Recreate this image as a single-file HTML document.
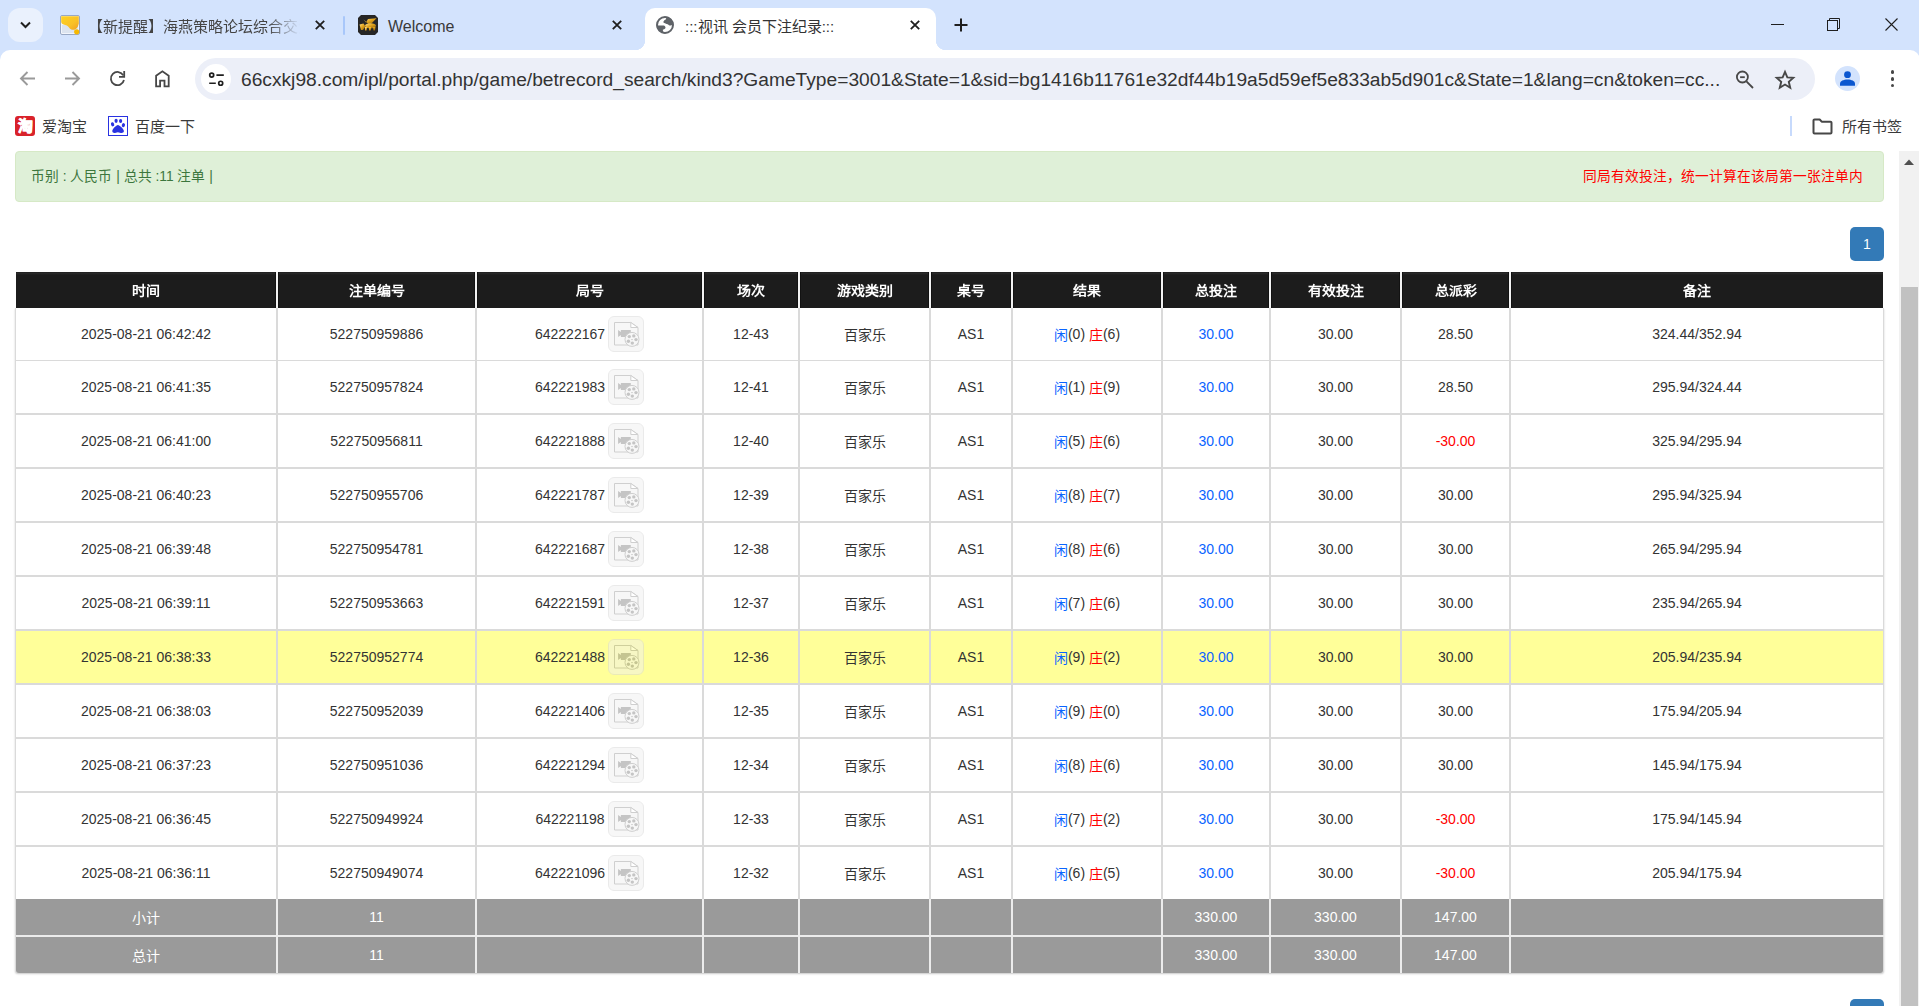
<!DOCTYPE html>
<html lang="zh-CN"><head><meta charset="utf-8"><title>:::视讯 会员下注纪录:::</title>
<style>
*{box-sizing:border-box;margin:0;padding:0}
html,body{width:1919px;height:1006px;overflow:hidden;background:#fff;font-family:"Liberation Sans",sans-serif;}
.abs{position:absolute}
.tabbar{position:absolute;left:0;top:0;width:1919px;height:62px;background:#d3e3fd}
.toolbar{position:absolute;left:0;top:50px;width:1920px;height:96px;background:#fff;border-radius:10px 10px 0 0}
.t{position:absolute;white-space:nowrap;line-height:1}
.cell{position:absolute;display:flex;align-items:center;justify-content:center;white-space:nowrap;font-size:14px;color:#333}
.hd{position:absolute;display:flex;align-items:center;justify-content:center;white-space:nowrap;font-size:14px;color:#fff;font-weight:bold;background:#1c1c1c}
.line{position:absolute;background:#dadada}
.vbtn{display:inline-block;width:36px;height:36px;margin-left:3px;opacity:.5;position:relative}
.vbtn svg{position:absolute;left:0;top:0}
.blue{color:#0a64ff}.red{color:#ff0000}
</style></head><body>

<div class="tabbar"></div>
<div class="abs" style="left:8px;top:8px;width:35px;height:34px;border-radius:12px;background:#eaf1fd"></div>
<svg class="abs" style="left:19px;top:18.5px" width="13" height="12" viewBox="0 0 13 12"><path d="M2 3.5l4.5 4.5 4.5-4.5" fill="none" stroke="#1f1f1f" stroke-width="2"/></svg>
<svg class="abs" style="left:60px;top:15px" width="20" height="20" viewBox="0 0 20 20"><defs><linearGradient id="yg" x1="0" y1="0" x2="1" y2="1"><stop offset="0" stop-color="#ffd21f"/><stop offset=".6" stop-color="#f9c127"/><stop offset="1" stop-color="#f0a020"/></linearGradient></defs><rect x="0.5" y="0.5" width="19" height="19" rx="1.5" fill="#f2f5fb" stroke="#98a8c4"/><rect x="2" y="10" width="16" height="8" fill="#dce4ef"/><path d="M1.2 1.2H18.8V8.5C18.2 10.5 17.8 13 15.5 14.2 13.5 15.2 11 14.8 9.8 13.5 8.8 12 7.8 10.6 5.2 10 3 9.5 1.2 8.5 1.2 7z" fill="url(#yg)"/><circle cx="16.7" cy="16.8" r="2.6" fill="#f6b800"/></svg>
<div class="t" style="left:88px;top:18.5px;font-size:15px;color:#444;width:212px;overflow:hidden;-webkit-mask-image:linear-gradient(90deg,#000 85%,transparent)">【新提醒】海燕策略论坛综合交流</div>
<svg class="abs" style="left:315px;top:20px" width="10" height="10" viewBox="0 0 10 10"><path d="M0.8 0.8L9.2 9.2M9.2 0.8L0.8 9.2" stroke="#1f1f1f" stroke-width="1.8"/></svg>
<div class="abs" style="left:343px;top:16px;width:2px;height:19px;background:#a8c7fa;border-radius:1px"></div>
<svg class="abs" style="left:358px;top:15px" width="20" height="20" viewBox="0 0 20 20"><defs><linearGradient id="gd" x1="0" y1="0" x2="1" y2="1"><stop offset="0" stop-color="#ffe08a"/><stop offset=".5" stop-color="#e0a21a"/><stop offset="1" stop-color="#8a5a08"/></linearGradient></defs><path d="M3 0h14l3 3v14l-3 3H3l-3-3V3z" fill="#262626"/><g fill="url(#gd)"><path d="M5.5 4.5l2.5 3 2-3.5 8.5-.8-5 5.2-3 .6z"/><ellipse cx="12.5" cy="10.8" rx="5.5" ry="2.6"/><path d="M1.5 9.5l4-1 2 3-2.5 3.5h-2z"/><path d="M7 12h2l-.5 3.5h-1.5zM11 12h2l-.3 3.5h-1.7zM15 12h2.5l-.5 3.5h-1.5z"/></g></svg>
<div class="t" style="left:388px;top:19px;font-size:16px;color:#3a3a3a">Welcome</div>
<svg class="abs" style="left:612px;top:20px" width="10" height="10" viewBox="0 0 10 10"><path d="M0.8 0.8L9.2 9.2M9.2 0.8L0.8 9.2" stroke="#1f1f1f" stroke-width="1.8"/></svg>
<div class="abs" style="left:645px;top:8px;width:291px;height:42px;background:#fff;border-radius:10px 10px 0 0"></div>
<div class="abs" style="left:635px;top:40px;width:10px;height:10px;background:radial-gradient(circle at 0 0,transparent 10px,#fff 10.5px)"></div>
<div class="abs" style="left:936px;top:40px;width:10px;height:10px;background:radial-gradient(circle at 100% 0,transparent 10px,#fff 10.5px)"></div>
<svg class="abs" style="left:656px;top:16px" width="18" height="18" viewBox="0 0 18 18"><defs><clipPath id="gc"><circle cx="9" cy="9" r="8.5"/></clipPath></defs><circle cx="9" cy="9" r="8" fill="none" stroke="#5f6368" stroke-width="2"/><g clip-path="url(#gc)" fill="#5f6368"><path d="M10.1 -1V3.2C8.5 3.8 7.3 5 7.4 6.5 8.5 7.4 10.5 7.8 11.6 8.3 12.5 8.8 12.8 9.3 13.5 9.4 14.8 9.5 16 9 19 8.5V-1z"/><path d="M-1 9.5H7.7C8.8 9.9 9.6 10.8 9.5 11.6 9.4 12.6 8.9 13.2 6.8 13.8 6.9 15 7.2 16.3 9.5 19H-1z"/></g></svg>
<div class="t" style="left:685px;top:18.5px;font-size:15px;color:#333">:::视讯 会员下注纪录:::</div>
<svg class="abs" style="left:910px;top:20px" width="10" height="10" viewBox="0 0 10 10"><path d="M0.8 0.8L9.2 9.2M9.2 0.8L0.8 9.2" stroke="#1f1f1f" stroke-width="1.8"/></svg>
<svg class="abs" style="left:954px;top:18px" width="14" height="14" viewBox="0 0 14 14"><path d="M7 0.5v13M0.5 7h13" stroke="#1f1f1f" stroke-width="2"/></svg>
<div class="abs" style="left:1771px;top:24px;width:13px;height:1px;background:#1f1f1f"></div>
<svg class="abs" style="left:1827px;top:18px" width="13" height="13" viewBox="0 0 13 13"><rect x="0.5" y="2.5" width="10" height="10" fill="none" stroke="#1f1f1f" stroke-width="1"/><path d="M2.5 2.5V0.5h10V10.5H10.5" fill="none" stroke="#1f1f1f" stroke-width="1"/></svg>
<svg class="abs" style="left:1885px;top:18px" width="13" height="13" viewBox="0 0 13 13"><path d="M0.5 0.5L12.5 12.5M12.5 0.5L0.5 12.5" stroke="#1f1f1f" stroke-width="1.1"/></svg>
<div class="toolbar"></div>
<svg class="abs" style="left:19px;top:70px" width="17" height="17" viewBox="0 0 17 17"><path d="M16 8.5H2.5M8.5 2L2 8.5 8.5 15" fill="none" stroke="#9a9a9a" stroke-width="1.9"/></svg>
<svg class="abs" style="left:64px;top:70px" width="17" height="17" viewBox="0 0 17 17"><path d="M1 8.5h13.5M8.5 2L15 8.5 8.5 15" fill="none" stroke="#9a9a9a" stroke-width="1.9"/></svg>
<svg class="abs" style="left:108px;top:70px" width="18" height="18" viewBox="0 0 18 18"><path d="M15.96 10A6.6 6.6 0 1 1 15.3 5.4" fill="none" stroke="#474747" stroke-width="1.8"/><path d="M16.2 1V6.9H11" fill="none" stroke="#474747" stroke-width="1.8"/></svg>
<svg class="abs" style="left:153px;top:69px" width="18" height="20" viewBox="0 0 18 20"><path d="M3.1 17.3V6.8L9.4 2.3 15.7 6.8V17.3H11.5V11.6H7.1V17.3z" fill="none" stroke="#474747" stroke-width="1.8"/></svg>
<div class="abs" style="left:195px;top:58px;width:1620px;height:42px;border-radius:21px;background:#eceff8"></div>
<div class="abs" style="left:201px;top:64px;width:30px;height:30px;border-radius:15px;background:#fff"></div>
<svg class="abs" style="left:207px;top:71px" width="18" height="16" viewBox="0 0 18 16"><circle cx="4.7" cy="4.1" r="2" fill="none" stroke="#1f1f1f" stroke-width="1.7"/><path d="M9.4 4.1H16.8M2.2 12.25H8.8" stroke="#1f1f1f" stroke-width="1.7"/><circle cx="13.7" cy="12.25" r="2" fill="none" stroke="#1f1f1f" stroke-width="1.7"/></svg>
<div class="t" id="url" style="left:241px;top:70px;font-size:19.2px;color:#333;letter-spacing:0px">66cxkj98.com/ipl/portal.php/game/betrecord_search/kind3?GameType=3001&amp;State=1&amp;sid=bg1416b11761e32df44b19a5d59ef5e833ab5d901c&amp;State=1&amp;lang=cn&amp;token=cc...</div>
<svg class="abs" style="left:1735px;top:70px" width="19" height="19" viewBox="0 0 19 19"><circle cx="7.4" cy="7" r="5.5" fill="none" stroke="#474747" stroke-width="1.8"/><path d="M5.1 7.2h4.7" stroke="#474747" stroke-width="1.8"/><path d="M11.4 11.4l6.6 6.6" stroke="#474747" stroke-width="1.8"/></svg>
<svg class="abs" style="left:1774px;top:69px" width="22" height="21" viewBox="0 0 22 21"><g transform="translate(11 10.5) scale(.9) translate(-11 -10.5)"><path d="M11 2l2.6 6.2 6.6.5-5 4.4 1.6 6.5L11 16.1l-5.8 3.5 1.6-6.5-5-4.4 6.6-.5z" fill="none" stroke="#474747" stroke-width="2.1" stroke-linejoin="miter"/></g></svg>
<div class="abs" style="left:1835px;top:66px;width:25px;height:25px;border-radius:13px;background:#d3e3fd"></div>
<svg class="abs" style="left:1839px;top:70px" width="17" height="17" viewBox="0 0 17 17"><circle cx="8.5" cy="4.7" r="3.4" fill="#0b57d0"/><path d="M1 15.8V13.6C1 11.2 4.5 9.6 8.5 9.6S16 11.2 16 13.6V15.8z" fill="#0b57d0"/></svg>
<div class="abs" style="left:1890.7px;top:70.10000000000001px;width:3.6px;height:3.6px;border-radius:2px;background:#474747"></div>
<div class="abs" style="left:1890.7px;top:76.95px;width:3.6px;height:3.6px;border-radius:2px;background:#474747"></div>
<div class="abs" style="left:1890.7px;top:83.8px;width:3.6px;height:3.6px;border-radius:2px;background:#474747"></div>
<div class="abs" style="left:15px;top:116px;width:20px;height:20px;border-radius:3px;background:#d9222a;overflow:hidden"><div class="abs" style="left:-1px;top:-0.5px;width:22px;height:20px;color:#fff;font-size:15px;font-weight:bold;-webkit-text-stroke:0.7px #fff;line-height:20px;text-align:center">淘</div></div>
<div class="t" style="left:42px;top:119px;font-size:15px;color:#3a3a3a">爱淘宝</div>
<div class="abs" style="left:108px;top:116px;width:20px;height:20px;border:1.5px solid #2932e1;background:#fff"></div>
<svg class="abs" style="left:110px;top:118px" width="16" height="16" viewBox="0 0 16 16"><g fill="#2932e1"><ellipse cx="2.6" cy="6.3" rx="1.6" ry="2.1" transform="rotate(-15 2.6 6.3)"/><ellipse cx="6.1" cy="2.8" rx="1.6" ry="2.1"/><ellipse cx="10.6" cy="3" rx="1.6" ry="2.1"/><ellipse cx="13.4" cy="7.2" rx="1.6" ry="2.1" transform="rotate(15 13.4 7.2)"/><path d="M7.9 6.9C9.5 6.9 13.9 11 13.9 13 13.9 15 11.5 15.2 10 14.7 9 14.4 8.5 14.2 7.9 14.2 7.3 14.2 6.8 14.4 5.8 14.7 4.3 15.2 2.3 15 2.3 13 2.3 11 6.3 6.9 7.9 6.9z"/></g></svg>
<div class="t" style="left:135px;top:119px;font-size:15px;color:#3a3a3a">百度一下</div>
<div class="abs" style="left:1790px;top:116px;width:2px;height:20px;background:#c7dafc"></div>
<svg class="abs" style="left:1812px;top:117.5px" width="21" height="17" viewBox="0 0 21 17"><path d="M1.5 2.5a1 1 0 0 1 1-1h5.2l2 2.2h8.8a1 1 0 0 1 1 1v9.8a1 1 0 0 1-1 1H2.5a1 1 0 0 1-1-1z" fill="none" stroke="#474747" stroke-width="2" stroke-linejoin="round"/></svg>
<div class="t" style="left:1842px;top:119px;font-size:15px;color:#3a3a3a">所有书签</div>
<div class="abs" style="left:1899px;top:151px;width:20px;height:855px;background:#f1f1f1"></div>
<svg class="abs" style="left:1903px;top:158px" width="12" height="8" viewBox="0 0 12 8"><path d="M1 7L6 1.5 11 7z" fill="#505050"/></svg>
<div class="abs" style="left:1901px;top:287px;width:17px;height:719px;background:#c1c1c1"></div>
<div class="abs" style="left:15px;top:151px;width:1869px;height:51px;border:1px solid #d6e9c6;border-radius:4px;background:#dff0d8"></div>
<div class="t" style="left:31px;top:170px;font-size:13.75px;color:#3c763d">币别 : 人民币 | 总共 :11 注单 |</div>
<div class="t" style="left:1583px;top:170px;font-size:13.75px;color:#ff0000">同局有效投注，统一计算在该局第一张注单内</div>
<div class="abs" style="left:1850px;top:227px;width:34px;height:34px;border-radius:5px;background:#337ab7;color:#fff;font-size:14px;line-height:34px;text-align:center">1</div>
<div class="abs" style="left:1850px;top:999px;width:34px;height:34px;border-radius:5px;background:#337ab7"></div>
<div class="abs" style="left:15px;top:308px;width:1869px;height:665px;border-radius:0 0 3px 3px;box-shadow:0 1px 2px rgba(0,0,0,.22);background:#dadada"></div>
<div class="hd" style="left:16px;top:272px;width:260px;height:36px"><span style="display:inline-block;transform:scaleY(.9);margin-top:-1px">时间</span></div>
<div class="hd" style="left:278px;top:272px;width:197px;height:36px"><span style="display:inline-block;transform:scaleY(.9);margin-top:-1px">注单编号</span></div>
<div class="hd" style="left:477px;top:272px;width:225px;height:36px"><span style="display:inline-block;transform:scaleY(.9);margin-top:-1px">局号</span></div>
<div class="hd" style="left:704px;top:272px;width:94px;height:36px"><span style="display:inline-block;transform:scaleY(.9);margin-top:-1px">场次</span></div>
<div class="hd" style="left:800px;top:272px;width:129px;height:36px"><span style="display:inline-block;transform:scaleY(.9);margin-top:-1px">游戏类别</span></div>
<div class="hd" style="left:931px;top:272px;width:80px;height:36px"><span style="display:inline-block;transform:scaleY(.9);margin-top:-1px">桌号</span></div>
<div class="hd" style="left:1013px;top:272px;width:148px;height:36px"><span style="display:inline-block;transform:scaleY(.9);margin-top:-1px">结果</span></div>
<div class="hd" style="left:1163px;top:272px;width:106px;height:36px"><span style="display:inline-block;transform:scaleY(.9);margin-top:-1px">总投注</span></div>
<div class="hd" style="left:1271px;top:272px;width:129px;height:36px"><span style="display:inline-block;transform:scaleY(.9);margin-top:-1px">有效投注</span></div>
<div class="hd" style="left:1402px;top:272px;width:107px;height:36px"><span style="display:inline-block;transform:scaleY(.9);margin-top:-1px">总派彩</span></div>
<div class="hd" style="left:1511px;top:272px;width:372px;height:36px"><span style="display:inline-block;transform:scaleY(.9);margin-top:-1px">备注</span></div>
<div class="abs" style="left:16px;top:272px;width:1867px;height:3px;background:linear-gradient(#1c1c1c,#2a2a2a 40%,#1c1c1c)"></div>
<div class="abs" style="left:275px;top:272px;width:1px;height:36px;background:#121212"></div>
<div class="abs" style="left:276px;top:272px;width:2px;height:36px;background:#f2f2f2"></div>
<div class="abs" style="left:278px;top:272px;width:1px;height:36px;background:#121212"></div>
<div class="abs" style="left:474px;top:272px;width:1px;height:36px;background:#121212"></div>
<div class="abs" style="left:475px;top:272px;width:2px;height:36px;background:#f2f2f2"></div>
<div class="abs" style="left:477px;top:272px;width:1px;height:36px;background:#121212"></div>
<div class="abs" style="left:701px;top:272px;width:1px;height:36px;background:#121212"></div>
<div class="abs" style="left:702px;top:272px;width:2px;height:36px;background:#f2f2f2"></div>
<div class="abs" style="left:704px;top:272px;width:1px;height:36px;background:#121212"></div>
<div class="abs" style="left:797px;top:272px;width:1px;height:36px;background:#121212"></div>
<div class="abs" style="left:798px;top:272px;width:2px;height:36px;background:#f2f2f2"></div>
<div class="abs" style="left:800px;top:272px;width:1px;height:36px;background:#121212"></div>
<div class="abs" style="left:928px;top:272px;width:1px;height:36px;background:#121212"></div>
<div class="abs" style="left:929px;top:272px;width:2px;height:36px;background:#f2f2f2"></div>
<div class="abs" style="left:931px;top:272px;width:1px;height:36px;background:#121212"></div>
<div class="abs" style="left:1010px;top:272px;width:1px;height:36px;background:#121212"></div>
<div class="abs" style="left:1011px;top:272px;width:2px;height:36px;background:#f2f2f2"></div>
<div class="abs" style="left:1013px;top:272px;width:1px;height:36px;background:#121212"></div>
<div class="abs" style="left:1160px;top:272px;width:1px;height:36px;background:#121212"></div>
<div class="abs" style="left:1161px;top:272px;width:2px;height:36px;background:#f2f2f2"></div>
<div class="abs" style="left:1163px;top:272px;width:1px;height:36px;background:#121212"></div>
<div class="abs" style="left:1268px;top:272px;width:1px;height:36px;background:#121212"></div>
<div class="abs" style="left:1269px;top:272px;width:2px;height:36px;background:#f2f2f2"></div>
<div class="abs" style="left:1271px;top:272px;width:1px;height:36px;background:#121212"></div>
<div class="abs" style="left:1399px;top:272px;width:1px;height:36px;background:#121212"></div>
<div class="abs" style="left:1400px;top:272px;width:2px;height:36px;background:#f2f2f2"></div>
<div class="abs" style="left:1402px;top:272px;width:1px;height:36px;background:#121212"></div>
<div class="abs" style="left:1508px;top:272px;width:1px;height:36px;background:#121212"></div>
<div class="abs" style="left:1509px;top:272px;width:2px;height:36px;background:#f2f2f2"></div>
<div class="abs" style="left:1511px;top:272px;width:1px;height:36px;background:#121212"></div>
<div class="cell" style="left:16px;top:308px;width:260px;height:52px;background:#fff">2025-08-21 06:42:42</div>
<div class="cell" style="left:278px;top:308px;width:197px;height:52px;background:#fff">522750959886</div>
<div class="cell" style="left:477px;top:308px;width:225px;height:52px;background:#fff">642222167<span class="vbtn"><svg width="36" height="36" viewBox="0 0 36 36"><rect x="0.5" y="0.5" width="35" height="35" rx="5.5" fill="#f0f0f0" stroke="#d6d6d6"/><path d="M6.5 6.5H22.8L30 11.5V29H6.5z" fill="#f0f0f0" stroke="#a0a0a0"/><path d="M22.8 6.5V11.5H30z" fill="#fff" stroke="#a0a0a0"/><path d="M12.9 13.9h9.9v7.2h-9.9zM10.1 13.9l2.8 2v3.2l-2.8 2z" fill="#8c8c8c"/><circle cx="24" cy="23.4" r="7" fill="#f0f0f0" stroke="#a0a0a0"/><g fill="#8c8c8c"><circle cx="21.3" cy="20.6" r="1.7"/><circle cx="25.8" cy="19.9" r="1.7"/><circle cx="28" cy="23.6" r="1.7"/><circle cx="24.3" cy="27.1" r="1.7"/><circle cx="20.4" cy="25.2" r="1.7"/></g><path d="M23.3 23.6h1.4" stroke="#8c8c8c"/></svg></span></div>
<div class="cell" style="left:704px;top:308px;width:94px;height:52px;background:#fff">12-43</div>
<div class="cell" style="left:800px;top:308px;width:129px;height:52px;background:#fff">百家乐</div>
<div class="cell" style="left:931px;top:308px;width:80px;height:52px;background:#fff">AS1</div>
<div class="cell" style="left:1013px;top:308px;width:148px;height:52px;background:#fff"><span class="blue">闲</span>(0)&nbsp;<span class="red">庄</span>(6)</div>
<div class="cell" style="left:1163px;top:308px;width:106px;height:52px;background:#fff"><span class="blue">30.00</span></div>
<div class="cell" style="left:1271px;top:308px;width:129px;height:52px;background:#fff">30.00</div>
<div class="cell" style="left:1402px;top:308px;width:107px;height:52px;background:#fff"><span class="">28.50</span></div>
<div class="cell" style="left:1511px;top:308px;width:372px;height:52px;background:#fff">324.44/352.94</div>
<div class="cell" style="left:16px;top:361px;width:260px;height:52px;background:#fff">2025-08-21 06:41:35</div>
<div class="cell" style="left:278px;top:361px;width:197px;height:52px;background:#fff">522750957824</div>
<div class="cell" style="left:477px;top:361px;width:225px;height:52px;background:#fff">642221983<span class="vbtn"><svg width="36" height="36" viewBox="0 0 36 36"><rect x="0.5" y="0.5" width="35" height="35" rx="5.5" fill="#f0f0f0" stroke="#d6d6d6"/><path d="M6.5 6.5H22.8L30 11.5V29H6.5z" fill="#f0f0f0" stroke="#a0a0a0"/><path d="M22.8 6.5V11.5H30z" fill="#fff" stroke="#a0a0a0"/><path d="M12.9 13.9h9.9v7.2h-9.9zM10.1 13.9l2.8 2v3.2l-2.8 2z" fill="#8c8c8c"/><circle cx="24" cy="23.4" r="7" fill="#f0f0f0" stroke="#a0a0a0"/><g fill="#8c8c8c"><circle cx="21.3" cy="20.6" r="1.7"/><circle cx="25.8" cy="19.9" r="1.7"/><circle cx="28" cy="23.6" r="1.7"/><circle cx="24.3" cy="27.1" r="1.7"/><circle cx="20.4" cy="25.2" r="1.7"/></g><path d="M23.3 23.6h1.4" stroke="#8c8c8c"/></svg></span></div>
<div class="cell" style="left:704px;top:361px;width:94px;height:52px;background:#fff">12-41</div>
<div class="cell" style="left:800px;top:361px;width:129px;height:52px;background:#fff">百家乐</div>
<div class="cell" style="left:931px;top:361px;width:80px;height:52px;background:#fff">AS1</div>
<div class="cell" style="left:1013px;top:361px;width:148px;height:52px;background:#fff"><span class="blue">闲</span>(1)&nbsp;<span class="red">庄</span>(9)</div>
<div class="cell" style="left:1163px;top:361px;width:106px;height:52px;background:#fff"><span class="blue">30.00</span></div>
<div class="cell" style="left:1271px;top:361px;width:129px;height:52px;background:#fff">30.00</div>
<div class="cell" style="left:1402px;top:361px;width:107px;height:52px;background:#fff"><span class="">28.50</span></div>
<div class="cell" style="left:1511px;top:361px;width:372px;height:52px;background:#fff">295.94/324.44</div>
<div class="cell" style="left:16px;top:415px;width:260px;height:52px;background:#fff">2025-08-21 06:41:00</div>
<div class="cell" style="left:278px;top:415px;width:197px;height:52px;background:#fff">522750956811</div>
<div class="cell" style="left:477px;top:415px;width:225px;height:52px;background:#fff">642221888<span class="vbtn"><svg width="36" height="36" viewBox="0 0 36 36"><rect x="0.5" y="0.5" width="35" height="35" rx="5.5" fill="#f0f0f0" stroke="#d6d6d6"/><path d="M6.5 6.5H22.8L30 11.5V29H6.5z" fill="#f0f0f0" stroke="#a0a0a0"/><path d="M22.8 6.5V11.5H30z" fill="#fff" stroke="#a0a0a0"/><path d="M12.9 13.9h9.9v7.2h-9.9zM10.1 13.9l2.8 2v3.2l-2.8 2z" fill="#8c8c8c"/><circle cx="24" cy="23.4" r="7" fill="#f0f0f0" stroke="#a0a0a0"/><g fill="#8c8c8c"><circle cx="21.3" cy="20.6" r="1.7"/><circle cx="25.8" cy="19.9" r="1.7"/><circle cx="28" cy="23.6" r="1.7"/><circle cx="24.3" cy="27.1" r="1.7"/><circle cx="20.4" cy="25.2" r="1.7"/></g><path d="M23.3 23.6h1.4" stroke="#8c8c8c"/></svg></span></div>
<div class="cell" style="left:704px;top:415px;width:94px;height:52px;background:#fff">12-40</div>
<div class="cell" style="left:800px;top:415px;width:129px;height:52px;background:#fff">百家乐</div>
<div class="cell" style="left:931px;top:415px;width:80px;height:52px;background:#fff">AS1</div>
<div class="cell" style="left:1013px;top:415px;width:148px;height:52px;background:#fff"><span class="blue">闲</span>(5)&nbsp;<span class="red">庄</span>(6)</div>
<div class="cell" style="left:1163px;top:415px;width:106px;height:52px;background:#fff"><span class="blue">30.00</span></div>
<div class="cell" style="left:1271px;top:415px;width:129px;height:52px;background:#fff">30.00</div>
<div class="cell" style="left:1402px;top:415px;width:107px;height:52px;background:#fff"><span class="red">-30.00</span></div>
<div class="cell" style="left:1511px;top:415px;width:372px;height:52px;background:#fff">325.94/295.94</div>
<div class="cell" style="left:16px;top:469px;width:260px;height:52px;background:#fff">2025-08-21 06:40:23</div>
<div class="cell" style="left:278px;top:469px;width:197px;height:52px;background:#fff">522750955706</div>
<div class="cell" style="left:477px;top:469px;width:225px;height:52px;background:#fff">642221787<span class="vbtn"><svg width="36" height="36" viewBox="0 0 36 36"><rect x="0.5" y="0.5" width="35" height="35" rx="5.5" fill="#f0f0f0" stroke="#d6d6d6"/><path d="M6.5 6.5H22.8L30 11.5V29H6.5z" fill="#f0f0f0" stroke="#a0a0a0"/><path d="M22.8 6.5V11.5H30z" fill="#fff" stroke="#a0a0a0"/><path d="M12.9 13.9h9.9v7.2h-9.9zM10.1 13.9l2.8 2v3.2l-2.8 2z" fill="#8c8c8c"/><circle cx="24" cy="23.4" r="7" fill="#f0f0f0" stroke="#a0a0a0"/><g fill="#8c8c8c"><circle cx="21.3" cy="20.6" r="1.7"/><circle cx="25.8" cy="19.9" r="1.7"/><circle cx="28" cy="23.6" r="1.7"/><circle cx="24.3" cy="27.1" r="1.7"/><circle cx="20.4" cy="25.2" r="1.7"/></g><path d="M23.3 23.6h1.4" stroke="#8c8c8c"/></svg></span></div>
<div class="cell" style="left:704px;top:469px;width:94px;height:52px;background:#fff">12-39</div>
<div class="cell" style="left:800px;top:469px;width:129px;height:52px;background:#fff">百家乐</div>
<div class="cell" style="left:931px;top:469px;width:80px;height:52px;background:#fff">AS1</div>
<div class="cell" style="left:1013px;top:469px;width:148px;height:52px;background:#fff"><span class="blue">闲</span>(8)&nbsp;<span class="red">庄</span>(7)</div>
<div class="cell" style="left:1163px;top:469px;width:106px;height:52px;background:#fff"><span class="blue">30.00</span></div>
<div class="cell" style="left:1271px;top:469px;width:129px;height:52px;background:#fff">30.00</div>
<div class="cell" style="left:1402px;top:469px;width:107px;height:52px;background:#fff"><span class="">30.00</span></div>
<div class="cell" style="left:1511px;top:469px;width:372px;height:52px;background:#fff">295.94/325.94</div>
<div class="cell" style="left:16px;top:523px;width:260px;height:52px;background:#fff">2025-08-21 06:39:48</div>
<div class="cell" style="left:278px;top:523px;width:197px;height:52px;background:#fff">522750954781</div>
<div class="cell" style="left:477px;top:523px;width:225px;height:52px;background:#fff">642221687<span class="vbtn"><svg width="36" height="36" viewBox="0 0 36 36"><rect x="0.5" y="0.5" width="35" height="35" rx="5.5" fill="#f0f0f0" stroke="#d6d6d6"/><path d="M6.5 6.5H22.8L30 11.5V29H6.5z" fill="#f0f0f0" stroke="#a0a0a0"/><path d="M22.8 6.5V11.5H30z" fill="#fff" stroke="#a0a0a0"/><path d="M12.9 13.9h9.9v7.2h-9.9zM10.1 13.9l2.8 2v3.2l-2.8 2z" fill="#8c8c8c"/><circle cx="24" cy="23.4" r="7" fill="#f0f0f0" stroke="#a0a0a0"/><g fill="#8c8c8c"><circle cx="21.3" cy="20.6" r="1.7"/><circle cx="25.8" cy="19.9" r="1.7"/><circle cx="28" cy="23.6" r="1.7"/><circle cx="24.3" cy="27.1" r="1.7"/><circle cx="20.4" cy="25.2" r="1.7"/></g><path d="M23.3 23.6h1.4" stroke="#8c8c8c"/></svg></span></div>
<div class="cell" style="left:704px;top:523px;width:94px;height:52px;background:#fff">12-38</div>
<div class="cell" style="left:800px;top:523px;width:129px;height:52px;background:#fff">百家乐</div>
<div class="cell" style="left:931px;top:523px;width:80px;height:52px;background:#fff">AS1</div>
<div class="cell" style="left:1013px;top:523px;width:148px;height:52px;background:#fff"><span class="blue">闲</span>(8)&nbsp;<span class="red">庄</span>(6)</div>
<div class="cell" style="left:1163px;top:523px;width:106px;height:52px;background:#fff"><span class="blue">30.00</span></div>
<div class="cell" style="left:1271px;top:523px;width:129px;height:52px;background:#fff">30.00</div>
<div class="cell" style="left:1402px;top:523px;width:107px;height:52px;background:#fff"><span class="">30.00</span></div>
<div class="cell" style="left:1511px;top:523px;width:372px;height:52px;background:#fff">265.94/295.94</div>
<div class="cell" style="left:16px;top:577px;width:260px;height:52px;background:#fff">2025-08-21 06:39:11</div>
<div class="cell" style="left:278px;top:577px;width:197px;height:52px;background:#fff">522750953663</div>
<div class="cell" style="left:477px;top:577px;width:225px;height:52px;background:#fff">642221591<span class="vbtn"><svg width="36" height="36" viewBox="0 0 36 36"><rect x="0.5" y="0.5" width="35" height="35" rx="5.5" fill="#f0f0f0" stroke="#d6d6d6"/><path d="M6.5 6.5H22.8L30 11.5V29H6.5z" fill="#f0f0f0" stroke="#a0a0a0"/><path d="M22.8 6.5V11.5H30z" fill="#fff" stroke="#a0a0a0"/><path d="M12.9 13.9h9.9v7.2h-9.9zM10.1 13.9l2.8 2v3.2l-2.8 2z" fill="#8c8c8c"/><circle cx="24" cy="23.4" r="7" fill="#f0f0f0" stroke="#a0a0a0"/><g fill="#8c8c8c"><circle cx="21.3" cy="20.6" r="1.7"/><circle cx="25.8" cy="19.9" r="1.7"/><circle cx="28" cy="23.6" r="1.7"/><circle cx="24.3" cy="27.1" r="1.7"/><circle cx="20.4" cy="25.2" r="1.7"/></g><path d="M23.3 23.6h1.4" stroke="#8c8c8c"/></svg></span></div>
<div class="cell" style="left:704px;top:577px;width:94px;height:52px;background:#fff">12-37</div>
<div class="cell" style="left:800px;top:577px;width:129px;height:52px;background:#fff">百家乐</div>
<div class="cell" style="left:931px;top:577px;width:80px;height:52px;background:#fff">AS1</div>
<div class="cell" style="left:1013px;top:577px;width:148px;height:52px;background:#fff"><span class="blue">闲</span>(7)&nbsp;<span class="red">庄</span>(6)</div>
<div class="cell" style="left:1163px;top:577px;width:106px;height:52px;background:#fff"><span class="blue">30.00</span></div>
<div class="cell" style="left:1271px;top:577px;width:129px;height:52px;background:#fff">30.00</div>
<div class="cell" style="left:1402px;top:577px;width:107px;height:52px;background:#fff"><span class="">30.00</span></div>
<div class="cell" style="left:1511px;top:577px;width:372px;height:52px;background:#fff">235.94/265.94</div>
<div class="cell" style="left:16px;top:631px;width:260px;height:52px;background:#ffff99">2025-08-21 06:38:33</div>
<div class="cell" style="left:278px;top:631px;width:197px;height:52px;background:#ffff99">522750952774</div>
<div class="cell" style="left:477px;top:631px;width:225px;height:52px;background:#ffff99">642221488<span class="vbtn"><svg width="36" height="36" viewBox="0 0 36 36"><rect x="0.5" y="0.5" width="35" height="35" rx="5.5" fill="#f0f0f0" stroke="#d6d6d6"/><path d="M6.5 6.5H22.8L30 11.5V29H6.5z" fill="#f0f0f0" stroke="#a0a0a0"/><path d="M22.8 6.5V11.5H30z" fill="#fff" stroke="#a0a0a0"/><path d="M12.9 13.9h9.9v7.2h-9.9zM10.1 13.9l2.8 2v3.2l-2.8 2z" fill="#8c8c8c"/><circle cx="24" cy="23.4" r="7" fill="#f0f0f0" stroke="#a0a0a0"/><g fill="#8c8c8c"><circle cx="21.3" cy="20.6" r="1.7"/><circle cx="25.8" cy="19.9" r="1.7"/><circle cx="28" cy="23.6" r="1.7"/><circle cx="24.3" cy="27.1" r="1.7"/><circle cx="20.4" cy="25.2" r="1.7"/></g><path d="M23.3 23.6h1.4" stroke="#8c8c8c"/></svg></span></div>
<div class="cell" style="left:704px;top:631px;width:94px;height:52px;background:#ffff99">12-36</div>
<div class="cell" style="left:800px;top:631px;width:129px;height:52px;background:#ffff99">百家乐</div>
<div class="cell" style="left:931px;top:631px;width:80px;height:52px;background:#ffff99">AS1</div>
<div class="cell" style="left:1013px;top:631px;width:148px;height:52px;background:#ffff99"><span class="blue">闲</span>(9)&nbsp;<span class="red">庄</span>(2)</div>
<div class="cell" style="left:1163px;top:631px;width:106px;height:52px;background:#ffff99"><span class="blue">30.00</span></div>
<div class="cell" style="left:1271px;top:631px;width:129px;height:52px;background:#ffff99">30.00</div>
<div class="cell" style="left:1402px;top:631px;width:107px;height:52px;background:#ffff99"><span class="">30.00</span></div>
<div class="cell" style="left:1511px;top:631px;width:372px;height:52px;background:#ffff99">205.94/235.94</div>
<div class="cell" style="left:16px;top:685px;width:260px;height:52px;background:#fff">2025-08-21 06:38:03</div>
<div class="cell" style="left:278px;top:685px;width:197px;height:52px;background:#fff">522750952039</div>
<div class="cell" style="left:477px;top:685px;width:225px;height:52px;background:#fff">642221406<span class="vbtn"><svg width="36" height="36" viewBox="0 0 36 36"><rect x="0.5" y="0.5" width="35" height="35" rx="5.5" fill="#f0f0f0" stroke="#d6d6d6"/><path d="M6.5 6.5H22.8L30 11.5V29H6.5z" fill="#f0f0f0" stroke="#a0a0a0"/><path d="M22.8 6.5V11.5H30z" fill="#fff" stroke="#a0a0a0"/><path d="M12.9 13.9h9.9v7.2h-9.9zM10.1 13.9l2.8 2v3.2l-2.8 2z" fill="#8c8c8c"/><circle cx="24" cy="23.4" r="7" fill="#f0f0f0" stroke="#a0a0a0"/><g fill="#8c8c8c"><circle cx="21.3" cy="20.6" r="1.7"/><circle cx="25.8" cy="19.9" r="1.7"/><circle cx="28" cy="23.6" r="1.7"/><circle cx="24.3" cy="27.1" r="1.7"/><circle cx="20.4" cy="25.2" r="1.7"/></g><path d="M23.3 23.6h1.4" stroke="#8c8c8c"/></svg></span></div>
<div class="cell" style="left:704px;top:685px;width:94px;height:52px;background:#fff">12-35</div>
<div class="cell" style="left:800px;top:685px;width:129px;height:52px;background:#fff">百家乐</div>
<div class="cell" style="left:931px;top:685px;width:80px;height:52px;background:#fff">AS1</div>
<div class="cell" style="left:1013px;top:685px;width:148px;height:52px;background:#fff"><span class="blue">闲</span>(9)&nbsp;<span class="red">庄</span>(0)</div>
<div class="cell" style="left:1163px;top:685px;width:106px;height:52px;background:#fff"><span class="blue">30.00</span></div>
<div class="cell" style="left:1271px;top:685px;width:129px;height:52px;background:#fff">30.00</div>
<div class="cell" style="left:1402px;top:685px;width:107px;height:52px;background:#fff"><span class="">30.00</span></div>
<div class="cell" style="left:1511px;top:685px;width:372px;height:52px;background:#fff">175.94/205.94</div>
<div class="cell" style="left:16px;top:739px;width:260px;height:52px;background:#fff">2025-08-21 06:37:23</div>
<div class="cell" style="left:278px;top:739px;width:197px;height:52px;background:#fff">522750951036</div>
<div class="cell" style="left:477px;top:739px;width:225px;height:52px;background:#fff">642221294<span class="vbtn"><svg width="36" height="36" viewBox="0 0 36 36"><rect x="0.5" y="0.5" width="35" height="35" rx="5.5" fill="#f0f0f0" stroke="#d6d6d6"/><path d="M6.5 6.5H22.8L30 11.5V29H6.5z" fill="#f0f0f0" stroke="#a0a0a0"/><path d="M22.8 6.5V11.5H30z" fill="#fff" stroke="#a0a0a0"/><path d="M12.9 13.9h9.9v7.2h-9.9zM10.1 13.9l2.8 2v3.2l-2.8 2z" fill="#8c8c8c"/><circle cx="24" cy="23.4" r="7" fill="#f0f0f0" stroke="#a0a0a0"/><g fill="#8c8c8c"><circle cx="21.3" cy="20.6" r="1.7"/><circle cx="25.8" cy="19.9" r="1.7"/><circle cx="28" cy="23.6" r="1.7"/><circle cx="24.3" cy="27.1" r="1.7"/><circle cx="20.4" cy="25.2" r="1.7"/></g><path d="M23.3 23.6h1.4" stroke="#8c8c8c"/></svg></span></div>
<div class="cell" style="left:704px;top:739px;width:94px;height:52px;background:#fff">12-34</div>
<div class="cell" style="left:800px;top:739px;width:129px;height:52px;background:#fff">百家乐</div>
<div class="cell" style="left:931px;top:739px;width:80px;height:52px;background:#fff">AS1</div>
<div class="cell" style="left:1013px;top:739px;width:148px;height:52px;background:#fff"><span class="blue">闲</span>(8)&nbsp;<span class="red">庄</span>(6)</div>
<div class="cell" style="left:1163px;top:739px;width:106px;height:52px;background:#fff"><span class="blue">30.00</span></div>
<div class="cell" style="left:1271px;top:739px;width:129px;height:52px;background:#fff">30.00</div>
<div class="cell" style="left:1402px;top:739px;width:107px;height:52px;background:#fff"><span class="">30.00</span></div>
<div class="cell" style="left:1511px;top:739px;width:372px;height:52px;background:#fff">145.94/175.94</div>
<div class="cell" style="left:16px;top:793px;width:260px;height:52px;background:#fff">2025-08-21 06:36:45</div>
<div class="cell" style="left:278px;top:793px;width:197px;height:52px;background:#fff">522750949924</div>
<div class="cell" style="left:477px;top:793px;width:225px;height:52px;background:#fff">642221198<span class="vbtn"><svg width="36" height="36" viewBox="0 0 36 36"><rect x="0.5" y="0.5" width="35" height="35" rx="5.5" fill="#f0f0f0" stroke="#d6d6d6"/><path d="M6.5 6.5H22.8L30 11.5V29H6.5z" fill="#f0f0f0" stroke="#a0a0a0"/><path d="M22.8 6.5V11.5H30z" fill="#fff" stroke="#a0a0a0"/><path d="M12.9 13.9h9.9v7.2h-9.9zM10.1 13.9l2.8 2v3.2l-2.8 2z" fill="#8c8c8c"/><circle cx="24" cy="23.4" r="7" fill="#f0f0f0" stroke="#a0a0a0"/><g fill="#8c8c8c"><circle cx="21.3" cy="20.6" r="1.7"/><circle cx="25.8" cy="19.9" r="1.7"/><circle cx="28" cy="23.6" r="1.7"/><circle cx="24.3" cy="27.1" r="1.7"/><circle cx="20.4" cy="25.2" r="1.7"/></g><path d="M23.3 23.6h1.4" stroke="#8c8c8c"/></svg></span></div>
<div class="cell" style="left:704px;top:793px;width:94px;height:52px;background:#fff">12-33</div>
<div class="cell" style="left:800px;top:793px;width:129px;height:52px;background:#fff">百家乐</div>
<div class="cell" style="left:931px;top:793px;width:80px;height:52px;background:#fff">AS1</div>
<div class="cell" style="left:1013px;top:793px;width:148px;height:52px;background:#fff"><span class="blue">闲</span>(7)&nbsp;<span class="red">庄</span>(2)</div>
<div class="cell" style="left:1163px;top:793px;width:106px;height:52px;background:#fff"><span class="blue">30.00</span></div>
<div class="cell" style="left:1271px;top:793px;width:129px;height:52px;background:#fff">30.00</div>
<div class="cell" style="left:1402px;top:793px;width:107px;height:52px;background:#fff"><span class="red">-30.00</span></div>
<div class="cell" style="left:1511px;top:793px;width:372px;height:52px;background:#fff">175.94/145.94</div>
<div class="cell" style="left:16px;top:847px;width:260px;height:52px;background:#fff">2025-08-21 06:36:11</div>
<div class="cell" style="left:278px;top:847px;width:197px;height:52px;background:#fff">522750949074</div>
<div class="cell" style="left:477px;top:847px;width:225px;height:52px;background:#fff">642221096<span class="vbtn"><svg width="36" height="36" viewBox="0 0 36 36"><rect x="0.5" y="0.5" width="35" height="35" rx="5.5" fill="#f0f0f0" stroke="#d6d6d6"/><path d="M6.5 6.5H22.8L30 11.5V29H6.5z" fill="#f0f0f0" stroke="#a0a0a0"/><path d="M22.8 6.5V11.5H30z" fill="#fff" stroke="#a0a0a0"/><path d="M12.9 13.9h9.9v7.2h-9.9zM10.1 13.9l2.8 2v3.2l-2.8 2z" fill="#8c8c8c"/><circle cx="24" cy="23.4" r="7" fill="#f0f0f0" stroke="#a0a0a0"/><g fill="#8c8c8c"><circle cx="21.3" cy="20.6" r="1.7"/><circle cx="25.8" cy="19.9" r="1.7"/><circle cx="28" cy="23.6" r="1.7"/><circle cx="24.3" cy="27.1" r="1.7"/><circle cx="20.4" cy="25.2" r="1.7"/></g><path d="M23.3 23.6h1.4" stroke="#8c8c8c"/></svg></span></div>
<div class="cell" style="left:704px;top:847px;width:94px;height:52px;background:#fff">12-32</div>
<div class="cell" style="left:800px;top:847px;width:129px;height:52px;background:#fff">百家乐</div>
<div class="cell" style="left:931px;top:847px;width:80px;height:52px;background:#fff">AS1</div>
<div class="cell" style="left:1013px;top:847px;width:148px;height:52px;background:#fff"><span class="blue">闲</span>(6)&nbsp;<span class="red">庄</span>(5)</div>
<div class="cell" style="left:1163px;top:847px;width:106px;height:52px;background:#fff"><span class="blue">30.00</span></div>
<div class="cell" style="left:1271px;top:847px;width:129px;height:52px;background:#fff">30.00</div>
<div class="cell" style="left:1402px;top:847px;width:107px;height:52px;background:#fff"><span class="red">-30.00</span></div>
<div class="cell" style="left:1511px;top:847px;width:372px;height:52px;background:#fff">205.94/175.94</div>
<div class="cell" style="left:16px;top:899px;width:260px;height:36px;background:#9a9a9a;color:#fff;">小计</div>
<div class="cell" style="left:278px;top:899px;width:197px;height:36px;background:#9a9a9a;color:#fff;">11</div>
<div class="cell" style="left:477px;top:899px;width:225px;height:36px;background:#9a9a9a;color:#fff;"></div>
<div class="cell" style="left:704px;top:899px;width:94px;height:36px;background:#9a9a9a;color:#fff;"></div>
<div class="cell" style="left:800px;top:899px;width:129px;height:36px;background:#9a9a9a;color:#fff;"></div>
<div class="cell" style="left:931px;top:899px;width:80px;height:36px;background:#9a9a9a;color:#fff;"></div>
<div class="cell" style="left:1013px;top:899px;width:148px;height:36px;background:#9a9a9a;color:#fff;"></div>
<div class="cell" style="left:1163px;top:899px;width:106px;height:36px;background:#9a9a9a;color:#fff;">330.00</div>
<div class="cell" style="left:1271px;top:899px;width:129px;height:36px;background:#9a9a9a;color:#fff;">330.00</div>
<div class="cell" style="left:1402px;top:899px;width:107px;height:36px;background:#9a9a9a;color:#fff;">147.00</div>
<div class="cell" style="left:1511px;top:899px;width:372px;height:36px;background:#9a9a9a;color:#fff;"></div>
<div class="cell" style="left:16px;top:937px;width:260px;height:36px;background:#9a9a9a;color:#fff;border-bottom-left-radius:3px;">总计</div>
<div class="cell" style="left:278px;top:937px;width:197px;height:36px;background:#9a9a9a;color:#fff;">11</div>
<div class="cell" style="left:477px;top:937px;width:225px;height:36px;background:#9a9a9a;color:#fff;"></div>
<div class="cell" style="left:704px;top:937px;width:94px;height:36px;background:#9a9a9a;color:#fff;"></div>
<div class="cell" style="left:800px;top:937px;width:129px;height:36px;background:#9a9a9a;color:#fff;"></div>
<div class="cell" style="left:931px;top:937px;width:80px;height:36px;background:#9a9a9a;color:#fff;"></div>
<div class="cell" style="left:1013px;top:937px;width:148px;height:36px;background:#9a9a9a;color:#fff;"></div>
<div class="cell" style="left:1163px;top:937px;width:106px;height:36px;background:#9a9a9a;color:#fff;">330.00</div>
<div class="cell" style="left:1271px;top:937px;width:129px;height:36px;background:#9a9a9a;color:#fff;">330.00</div>
<div class="cell" style="left:1402px;top:937px;width:107px;height:36px;background:#9a9a9a;color:#fff;">147.00</div>
<div class="cell" style="left:1511px;top:937px;width:372px;height:36px;background:#9a9a9a;color:#fff;border-bottom-right-radius:3px;"></div>
<div class="abs" style="left:276px;top:899px;width:2px;height:74px;background:#ececec"></div>
<div class="abs" style="left:475px;top:899px;width:2px;height:74px;background:#ececec"></div>
<div class="abs" style="left:702px;top:899px;width:2px;height:74px;background:#ececec"></div>
<div class="abs" style="left:798px;top:899px;width:2px;height:74px;background:#ececec"></div>
<div class="abs" style="left:929px;top:899px;width:2px;height:74px;background:#ececec"></div>
<div class="abs" style="left:1011px;top:899px;width:2px;height:74px;background:#ececec"></div>
<div class="abs" style="left:1161px;top:899px;width:2px;height:74px;background:#ececec"></div>
<div class="abs" style="left:1269px;top:899px;width:2px;height:74px;background:#ececec"></div>
<div class="abs" style="left:1400px;top:899px;width:2px;height:74px;background:#ececec"></div>
<div class="abs" style="left:1509px;top:899px;width:2px;height:74px;background:#ececec"></div>
<div class="abs" style="left:16px;top:935px;width:1868px;height:2px;background:#ececec"></div>
</body></html>
